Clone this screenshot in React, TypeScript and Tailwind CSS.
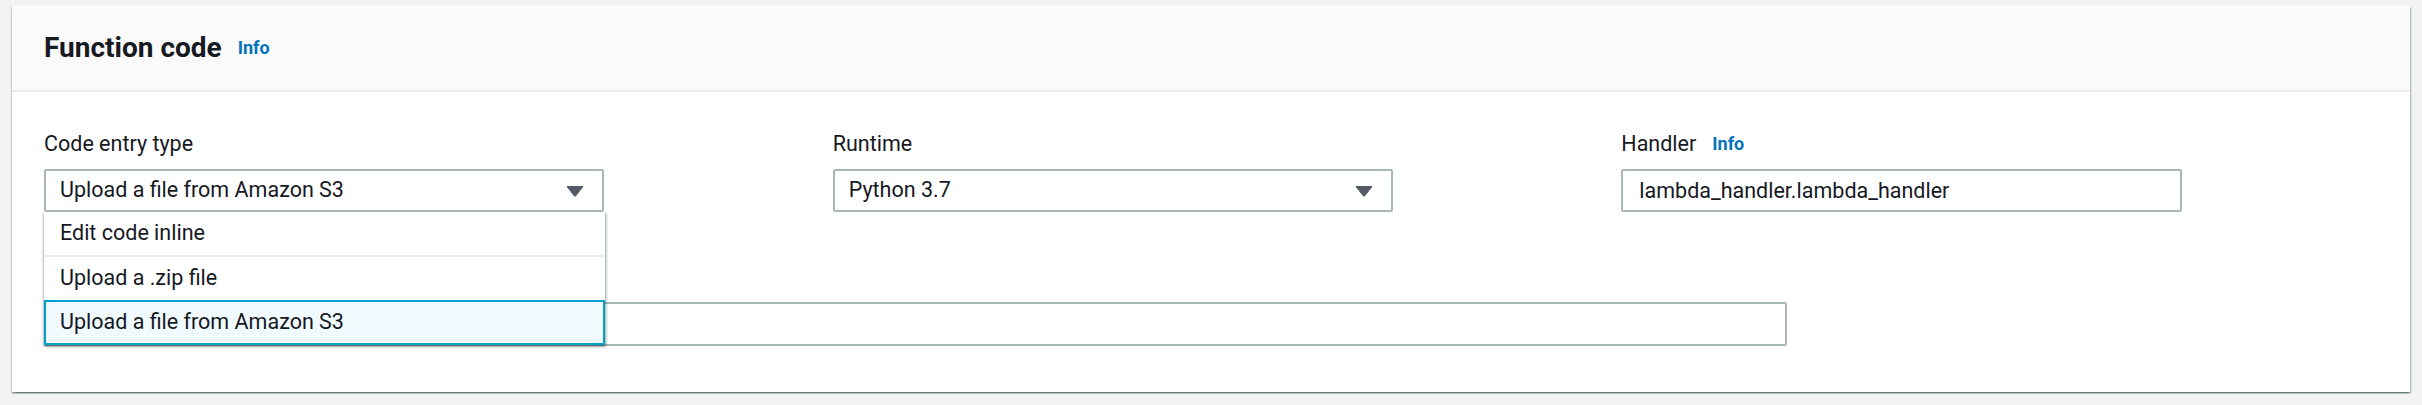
import { FC } from 'react';

const font = { fontFamily: 'Roboto, "Liberation Sans", Arial, sans-serif' };

const Caret: FC = () => (
    <svg width="18" height="12" viewBox="0 0 18 12" className="shrink-0">
        <path d="M1 1.5 L17 1.5 L9.6 11 Q9 11.8 8.4 11 Z" fill="#545b64" stroke="#545b64" strokeWidth="1" strokeLinejoin="round" />
    </svg>
);

const Info: FC = () => <span className="text-[18px] font-bold text-[#0073bb] cursor-pointer">Info</span>;

type SelectProps = { value: string };

const Select: FC<SelectProps> = ({ value }) => (
    <div className="flex items-center justify-between w-[560px] h-[43px] border-2 border-[#aab7b8] rounded-[2px] bg-white pl-[14px] pr-[18px] text-[21.5px] text-[#16191f]">
        <span>{value}</span>
        <Caret />
    </div>
);

const options = ['Edit code inline', 'Upload a .zip file', 'Upload a file from Amazon S3'];

export default function App() {
    return (
        <div className="w-[2422px] h-[405px] bg-[#f2f3f3] pt-[5px] px-3" style={font}>
            <section className="bg-white shadow-[0_1.5px_1.5px_0_rgba(0,28,36,0.35),1.5px_1.5px_1.5px_0_rgba(0,28,36,0.18),-1.5px_1.5px_1.5px_0_rgba(0,28,36,0.18)]">
                <header className="h-[87px] flex items-center gap-4 px-8 bg-[#fafafa] border-b-2 border-[#eaeded]">
                    <h2 className="text-[28px] font-bold text-[#16191f]">Function code</h2>
                    <Info />
                </header>

                <div className="px-8 pt-[37px] pb-[46px] flex flex-col gap-[50px]">
                    <div className="grid grid-cols-3 gap-8">
                        <div className="relative flex flex-col gap-[10px]">
                            <label className="text-[21.5px] leading-[30px] text-[#16191f]">Code entry type</label>
                            <Select value="Upload a file from Amazon S3" />

                            {/* open dropdown */}
                            <ul className="absolute left-0 top-[83px] z-10 w-[561px] bg-white text-[21.5px] text-[#16191f] shadow-[0_1.5px_2px_0_rgba(0,28,36,0.3),1.5px_1px_2px_0_rgba(0,28,36,0.2),-1.5px_1px_2px_0_rgba(0,28,36,0.2)]">
                                {options.map((o, i) => (
                                    <li
                                        key={o}
                                        className={
                                            i === 2
                                                ? 'h-[45px] flex items-center pl-[14px] border-2 border-[#00a1c9] bg-[#f1faff]'
                                                : i === 0
                                                ? 'h-[45px] flex items-center pl-4 border-b-2 border-[#eaeded]'
                                                : 'h-[43px] flex items-center pl-4'
                                        }
                                    >
                                        {o}
                                    </li>
                                ))}
                            </ul>
                        </div>

                        <div className="flex flex-col gap-[10px]">
                            <label className="text-[21.5px] leading-[30px] text-[#16191f]">Runtime</label>
                            <Select value="Python 3.7" />
                        </div>

                        <div className="flex flex-col gap-[10px]">
                            <label className="flex items-center gap-4 text-[21.5px] leading-[30px] text-[#16191f]">
                                Handler <Info />
                            </label>
                            <input
                                readOnly
                                value="lambda_handler.lambda_handler"
                                className="w-[561px] h-[43px] border-2 border-[#aab7b8] rounded-[2px] pl-4 text-[21.5px] text-[#16191f] outline-none"
                                style={font}
                            />
                        </div>
                    </div>

                    <div className="flex flex-col gap-[10px]">
                        {/* label of this field sits under the open dropdown */}
                        <div className="h-[30px]" />
                        <input
                            readOnly
                            className="w-[1743px] h-[44px] border-2 border-[#aab7b8] rounded-[2px] pl-4 text-[21.5px] outline-none"
                            style={font}
                        />
                    </div>
                </div>
            </section>
        </div>
    );
}
